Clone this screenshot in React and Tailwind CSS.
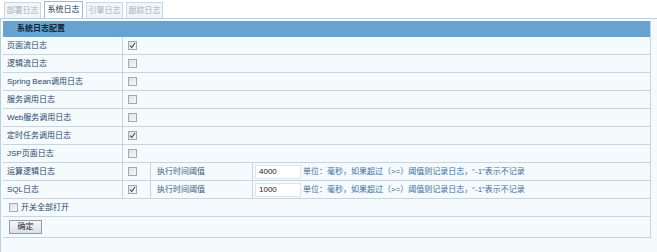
import { useState } from "react";

const rows = [
  { label: "页面流日志", checked: true },
  { label: "逻辑流日志", checked: false },
  { label: "Spring Bean调用日志", checked: false },
  { label: "服务调用日志", checked: false },
  { label: "Web服务调用日志", checked: false },
  { label: "定时任务调用日志", checked: true },
  { label: "JSP页面日志", checked: false },
  { label: "运算逻辑日志", checked: false, threshold: "4000" },
  { label: "SQL日志", checked: true, threshold: "1000" },
];

const tabs = ["部署日志", "系统日志", "引擎日志", "跟踪日志"];

function Box({ checked }) {
  return (
    <span className="inline-flex h-[9px] w-[9px] items-center justify-center border border-[#a3a9b0] bg-gradient-to-br from-[#dfe3e8] to-[#f6f7f8]">
      {checked && (
        <svg width="7" height="7" viewBox="0 0 7 7">
          <path d="M1 3.6 L2.8 5.5 L6 1" fill="none" stroke="#3b4a5c" strokeWidth="1.1" />
        </svg>
      )}
    </span>
  );
}

export default function App() {
  const [active] = useState(1);

  return (
    <div
      className="h-[252px] w-[657px] overflow-hidden bg-white text-[8px] leading-none text-[#28466a]"
      style={{ fontFamily: '"Liberation Sans", "Noto Sans CJK SC", sans-serif' }}
    >
      {/* tabs */}
      <div className="flex h-[18px] items-end gap-[3px] pl-[4px]">
        {tabs.map((t, i) => (
          <div
            key={t}
            className={
              i === active
                ? "flex h-[17px] w-[39px] items-center justify-center border border-b-0 border-[#9fb8cc] bg-white text-[#23364d]"
                : "flex h-[16px] w-[37px] items-center justify-center border border-b-0 border-[#c9d7e2] bg-[#f1f6fa] text-[#a5b3c0]"
            }
          >
            {t}
          </div>
        ))}
      </div>

      {/* panel */}
      <div className="h-[234px] border-l border-t border-[#b9cfe0] bg-[#f5fafd] pl-[2px] pt-[2px]">
        <div className="w-[648px] border-r border-b border-[#c4d4e0]">
          <div className="flex h-[16px] items-center bg-[#68a3cf] pl-[14px] font-bold text-[#14233a]">
            系统日志配置
          </div>

          {rows.map((r) => (
            <div key={r.label} className="flex h-[18px] border-b border-[#c6d5e1]">
              <div className="flex w-[120px] items-center border-r border-[#c6d5e1] pl-[4px]">
                {r.label}
              </div>
              {r.threshold ? (
                <>
                  <div className="flex w-[28px] items-center border-r border-[#c6d5e1] pl-[5px]">
                    <Box checked={r.checked} />
                  </div>
                  <div className="flex w-[102px] items-center border-r border-[#c6d5e1] pl-[6px] text-[#3b5c80]">
                    执行时间阈值
                  </div>
                  <div className="flex flex-1 items-center pl-[2px]">
                    <div className="flex h-[14px] w-[46px] items-center border border-[#dde5ec] bg-white pl-[3px] text-[#222]">
                      {r.threshold}
                    </div>
                    <span className="ml-[2px] text-[#3d6d9c]">
                      单位：毫秒，如果超过（&gt;=）阈值则记录日志，“-1”表示不记录
                    </span>
                  </div>
                </>
              ) : (
                <div className="flex flex-1 items-center pl-[5px]">
                  <Box checked={r.checked} />
                </div>
              )}
            </div>
          ))}

          <div className="flex h-[18px] items-center gap-[3px] border-b border-[#c6d5e1] pl-[6px]">
            <Box checked={false} />
            <span>开关全部打开</span>
          </div>

          <div className="flex h-[20px] items-center pl-[6px]">
            <button className="flex h-[14px] w-[33px] items-center justify-center border border-[#8e9aa6] bg-gradient-to-b from-[#f7f7f7] to-[#dcdfe2] text-[#1d2a38]">
              确定
            </button>
          </div>
        </div>
      </div>
    </div>
  );
}
